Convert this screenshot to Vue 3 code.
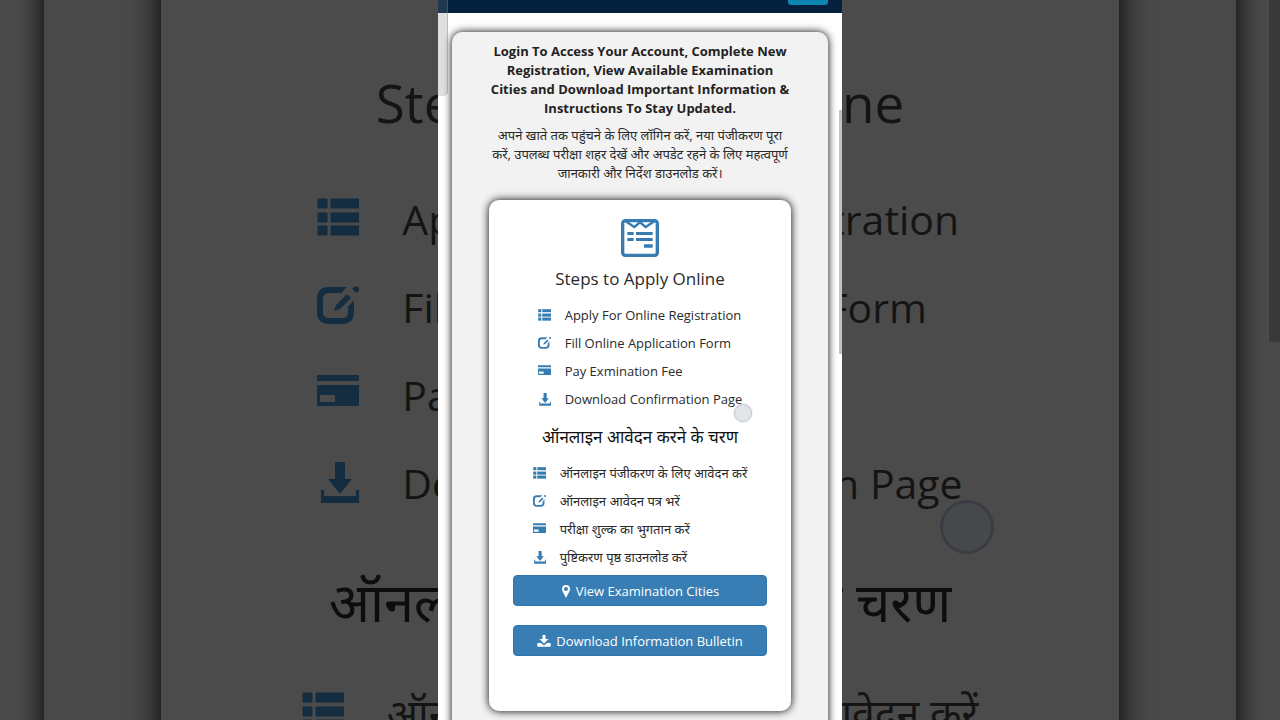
<script setup>
const englishSteps = [
  { icon: 'list', text: 'Apply For Online Registration' },
  { icon: 'edit', text: 'Fill Online Application Form' },
  { icon: 'card', text: 'Pay Exmination Fee' },
  { icon: 'save', text: 'Download Confirmation Page' },
]
const hindiSteps = [
  { icon: 'list', text: 'ऑनलाइन पंजीकरण के लिए आवेदन करें' },
  { icon: 'edit', text: 'ऑनलाइन आवेदन पत्र भरें' },
  { icon: 'card', text: 'परीक्षा शुल्क का भुगतान करें' },
  { icon: 'save', text: 'पुष्टिकरण पृष्ठ डाउनलोड करें' },
]
</script>

<template>
  <div class="page">
    <svg class="sprite" aria-hidden="true">
      <symbol id="list" viewBox="0 0 42 42">
        <path d="M1 1h9v9H1zM14 1h28v9H14zM1 15h9v9H1zM14 15h28v9H14zM1 28h9v9H1zM14 28h28v9H14z" fill="currentColor" stroke="currentColor" stroke-linejoin="round" />
      </symbol>
      <symbol id="edit" viewBox="0 0 42 42">
        <path d="M25 4H12Q3 4 3 13v13q0 9 9 9h13q9 0 9-9v-6" fill="none" stroke="currentColor" stroke-width="6" />
        <path d="M24 1h6l-6 6zM37 14v7h-6v0z" fill="currentColor" />
        <path d="M30 8l4 4-11 11-6 2 2-6zM37 1q3-2 5 1 1 2-1 4l-2 1-4-4z" fill="currentColor" />
      </symbol>
      <symbol id="card" viewBox="0 0 42 42">
        <path fill-rule="evenodd" d="M1 1h40q1 0 1 1v5H0V2q0-1 1-1zM0 11h42v20q0 1-1 1H1q-1 0-1-1zM3 21v7h15v-7z" fill="currentColor" />
      </symbol>
      <symbol id="save" viewBox="0 0 42 42">
        <path d="M18 0h10v17h7L23 32 11 17h7zM4 28h3v6h32v-6h3v13H4z" fill="currentColor" />
      </symbol>
      <symbol id="pin" viewBox="2 0 10 14">
        <path fill-rule="evenodd" d="M7 1a4 4 0 0 1 4 4c0 2-1 3-2 5l-2 4-2-4C4 8 3 7 3 5a4 4 0 0 1 4-4zM7 3a2 2 0 1 0 0 4 2 2 0 0 0 0-4z" fill="currentColor" />
      </symbol>
      <symbol id="download" viewBox="0 0 14 14">
        <path d="M5.500 1h3v4h3L7 9.500 2.500 5h3zM1 9h3l3 2.500L10 9h3q.7 0 .7.700V12q0 .7-.7.700H1Q.3 12.700.3 12V9.700Q.3 9 1 9z" fill="currentColor" />
      </symbol>
    </svg>

    <div class="backdrop" aria-hidden="true">
      <div class="back-panel">
        <div class="back-card">
          <p class="back-title">Steps to Apply Online</p>
          <ul class="back-steps">
            <li v-for="s in englishSteps" :key="s.text">
              <svg><use :href="'#' + s.icon" /></svg><span>{{ s.text }}</span>
            </li>
          </ul>
          <p class="back-title hindi">ऑनलाइन आवेदन करने के चरण</p>
          <ul class="back-steps">
            <li>
              <svg><use href="#list" /></svg><span>{{ hindiSteps[0].text }}</span>
            </li>
          </ul>
        </div>
      </div>
      <i class="back-touch"></i>
      <i class="back-scroll"></i>
    </div>

    <main class="phone">
      <header class="topbar"><span class="topbar-chip"></span></header>
      <section class="panel">
        <h1>
          Login To Access Your Account, Complete New<br />
          Registration, View Available Examination<br />
          Cities and Download Important Information &amp;<br />
          Instructions To Stay Updated.
        </h1>
        <p class="intro">
          अपने खाते तक पहुंचने के लिए लॉगिन करें, नया पंजीकरण पूरा<br />
          करें, उपलब्ध परीक्षा शहर देखें और अपडेट रहने के लिए महत्वपूर्ण<br />
          जानकारी और निर्देश डाउनलोड करें।
        </p>

        <article class="card">
          <svg class="form-icon" viewBox="0 0 114 114" aria-hidden="true">
            <rect x="5" y="5" width="104" height="104" rx="8" fill="none" stroke="currentColor" stroke-width="10" />
            <path d="M14 7 40 24 57 10 74 24 100 7" fill="none" stroke="currentColor" stroke-width="7" />
            <path d="M19 39h19v9H19zM45 39h50v9H45zM19 57h19v9H19zM45 57h50v9H45zM69 76h26v10H69z" fill="currentColor" />
          </svg>
          <h2>Steps to Apply Online</h2>
          <ul class="steps">
            <li v-for="s in englishSteps" :key="s.text">
              <svg aria-hidden="true"><use :href="'#' + s.icon" /></svg><span>{{ s.text }}</span>
            </li>
          </ul>
          <h2 class="hindi">ऑनलाइन आवेदन करने के चरण</h2>
          <ul class="steps">
            <li v-for="s in hindiSteps" :key="s.text">
              <svg aria-hidden="true"><use :href="'#' + s.icon" /></svg><span>{{ s.text }}</span>
            </li>
          </ul>
          <div class="actions">
            <button type="button"><svg class="pin" aria-hidden="true"><use href="#pin" /></svg>View Examination Cities</button>
            <button type="button"><svg aria-hidden="true"><use href="#download" /></svg>Download Information Bulletin</button>
          </div>
          <i class="touch"></i>
        </article>
      </section>
      <i class="edge-tab"></i>
      <i class="scroll-thumb"></i>
    </main>
  </div>
</template>

<style>
body {
  margin: 0;
  background: #4b4b4b;
}
</style>

<style scoped>
.page {
  position: relative;
  height: 100vh;
  overflow: hidden;
  background: #4b4b4b;
  font-family: "Open Sans", "Noto Sans", "Noto Sans Devanagari", sans-serif;
}
.sprite {
  position: absolute;
  width: 0;
  height: 0;
}
h1, h2, p, ul {
  margin: 0;
  padding: 0;
  font-weight: 400;
}
ul {
  list-style: none;
}

/* Enlarged, dimmed copy behind the phone column */
.backdrop {
  position: absolute;
  inset: -40px 0;
  overflow: hidden;
  color: #141414;
}
.back-panel {
  height: 100%;
  margin: 0 44px;
  background: #494949;
  box-shadow: 0 0 28px #000;
}
.back-card {
  display: flex;
  flex-direction: column;
  align-items: center;
  box-sizing: border-box;
  height: 100%;
  margin: 0 117px;
  padding-top: 103px;
  background: #4b4b4b;
  box-shadow: 0 0 28px #000;
  white-space: nowrap;
}
.back-title {
  flex: none;
  font-size: 53px;
  line-height: 80px;
}
.back-title.hindi {
  margin: 34px 0 28px;
  color: #0d0d0d;
  font-size: 54px;
}
.back-steps {
  flex: none;
  padding-top: 32px;
}
.hindi + .back-steps {
  padding-top: 0;
}
.back-steps li {
  display: flex;
  align-items: center;
  gap: 43px;
  height: 88px;
  font-size: 41px;
}
.back-steps svg {
  width: 42px;
  height: 42px;
  color: #152d40;
}
.back-touch {
  position: absolute;
  left: 940px;
  top: 540px;
  box-sizing: border-box;
  width: 54px;
  height: 54px;
  border: 3px solid #393d43;
  border-radius: 50%;
  background: #44464880;
}
.back-scroll {
  position: absolute;
  top: 0;
  right: 0;
  width: 11px;
  height: 382px;
  background: #393939;
}

/* Phone column */
.phone {
  position: relative;
  width: 100%;
  max-width: 404px;
  height: 100%;
  margin: 0 auto;
  overflow: hidden;
  background: #fff;
  color: #2a2a2a;
  text-align: center;
}
.topbar {
  display: flex;
  justify-content: flex-end;
  height: 13px;
  padding-right: 14px;
  background: #03213f;
}
.topbar-chip {
  width: 40px;
  height: 5px;
  border-radius: 0 0 3px 3px;
  background: #0d86b4;
}
.panel {
  margin: 19px 14px 0;
  padding: 10px 37px 48px;
  border-radius: 10px;
  background: #f2f2f2;
  box-shadow: 0 0 9px #000;
}
.panel h1 {
  color: #222;
  font-size: 13px;
  font-weight: 700;
  line-height: 19px;
  white-space: nowrap;
}
.intro {
  margin-top: 8px;
  font-size: 13px;
  line-height: 19px;
  white-space: nowrap;
}
.card {
  position: relative;
  display: flex;
  flex-direction: column;
  align-items: center;
  margin-top: 17px;
  padding: 19px 24px 55px;
  border-radius: 10px;
  background: #fff;
  box-shadow: 0 0 9px #000;
}
.form-icon {
  width: 38px;
  height: 38px;
  color: #377cb0;
}
.card h2 {
  margin-top: 9px;
  font-size: 17px;
  line-height: 26px;
  white-space: nowrap;
}
.card h2.hindi {
  margin-top: 11px;
  color: #111;
}
.steps {
  padding-top: 9px;
}
.steps li {
  display: flex;
  align-items: center;
  gap: 14px;
  height: 28px;
  font-size: 13px;
  white-space: nowrap;
}
.steps svg {
  width: 13px;
  height: 13px;
  color: #377cb0;
}
.actions {
  display: grid;
  gap: 19px;
  width: 100%;
  margin-top: 4px;
}
.actions button {
  display: flex;
  align-items: center;
  justify-content: center;
  gap: 5px;
  height: 31px;
  padding: 0;
  border: 1px solid #3376ab;
  border-radius: 4px;
  background: #387eb4;
  color: #fff;
  font: inherit;
  font-size: 13px;
}
.actions svg {
  width: 14px;
  height: 14px;
}
.actions .pin {
  width: 10px;
}
.touch {
  position: absolute;
  left: 245px;
  top: 204px;
  box-sizing: border-box;
  width: 18px;
  height: 18px;
  border: 1px solid #bfc6d3;
  border-radius: 50%;
  background: #e0e2e5e6;
  box-shadow: 0 0 2px #bfc6d3;
}
.edge-tab {
  position: absolute;
  left: 0;
  top: 0;
  width: 9px;
  height: 96px;
  border-right: 1px solid #80808060;
  border-radius: 0 0 5px 0;
  background: #80808040;
}
.scroll-thumb {
  position: absolute;
  right: 0;
  top: 110px;
  width: 3px;
  height: 244px;
  background: #c2c2c2;
}
</style>
